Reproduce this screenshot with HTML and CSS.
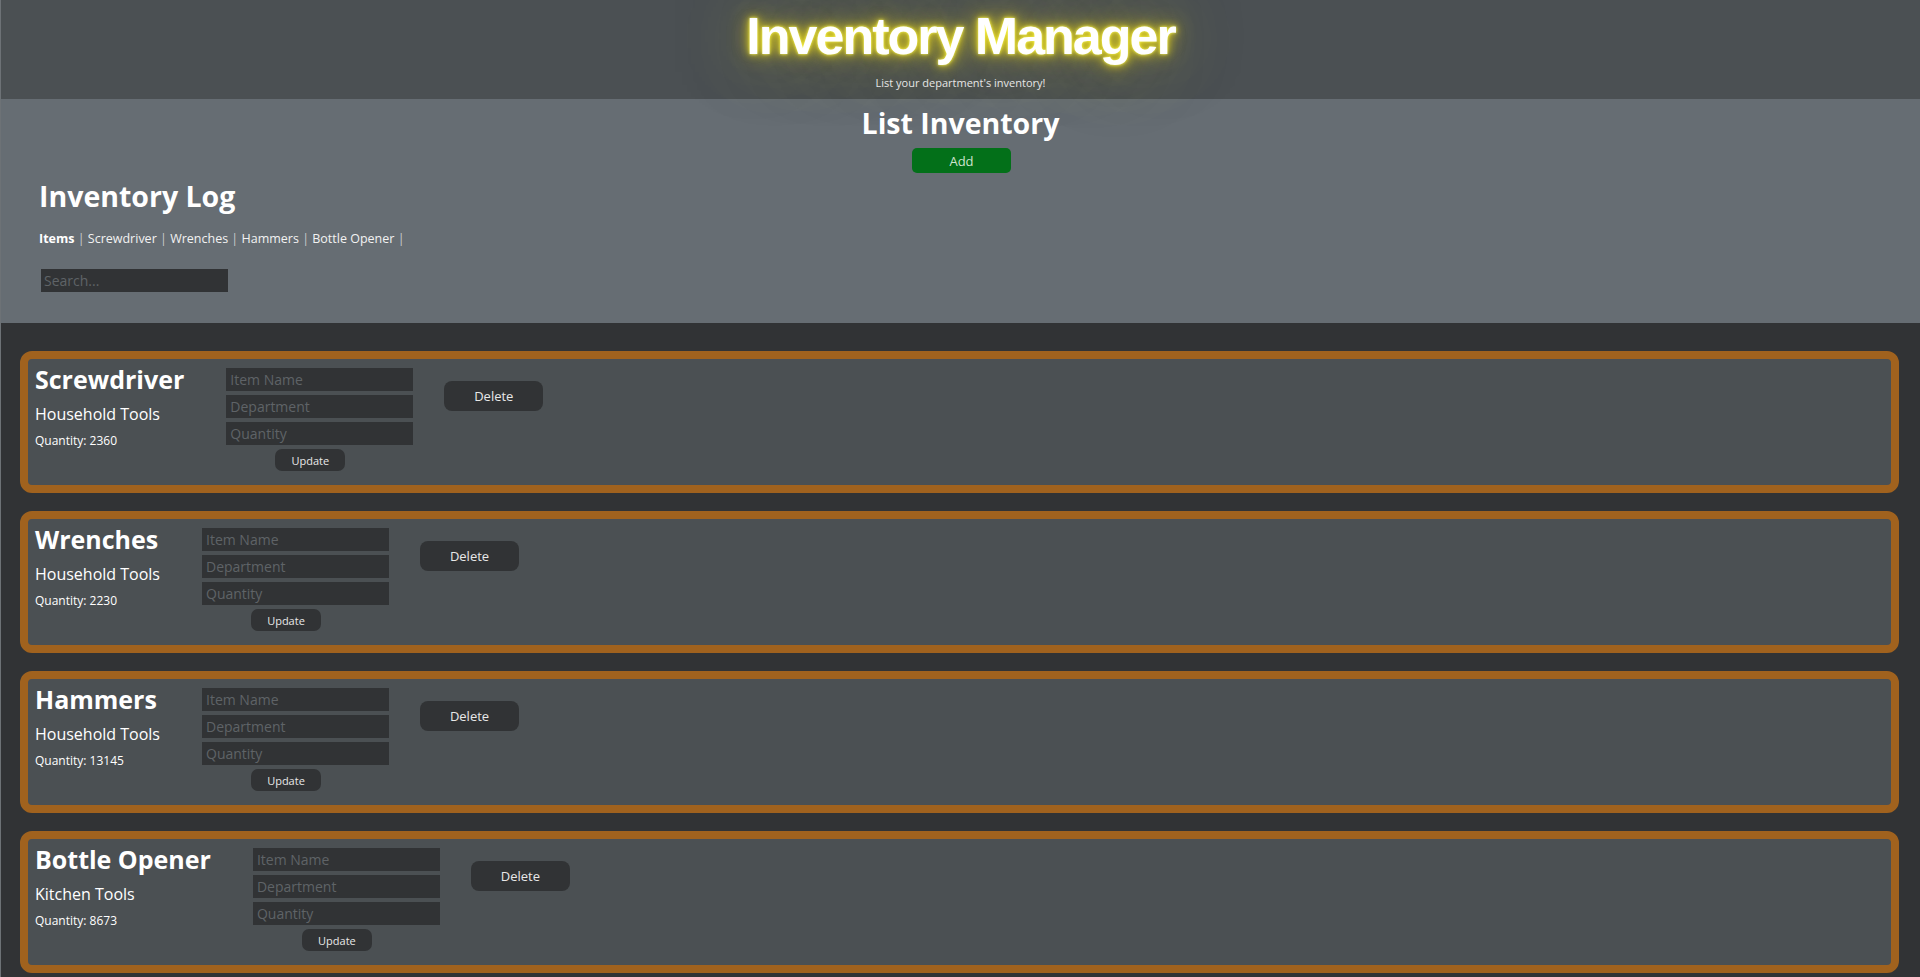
FILE: index.html
```html
<!DOCTYPE html>
<html lang="en">
<head>
<meta charset="utf-8">
<title>Inventory Manager</title>
<link rel="stylesheet" href="styles.css">
</head>
<body>
<header class="top">
  <h1 class="brand">Inventory Manager</h1>
  <p class="tagline">List your department's inventory!</p>
</header>
<section class="panel">
  <h2 class="panel-title">List Inventory</h2>
  <div class="panel-actions"><button class="btn-add">Add</button></div>
  <div class="log">
    <h2 class="log-title">Inventory Log</h2>
    <nav class="log-links"><b class="log-current">Items</b> <span class="sep">|</span> <a class="log-link">Screwdriver</a> <span class="sep">|</span> <a class="log-link">Wrenches</a> <span class="sep">|</span> <a class="log-link">Hammers</a> <span class="sep">|</span> <a class="log-link">Bottle Opener</a> <span class="sep">|</span></nav>
    <input class="search" type="text" placeholder="Search...">
  </div>
</section>
<main class="list">
  <article class="card">
    <div class="info">
      <h3 class="name">Screwdriver</h3>
      <p class="dept">Household Tools</p>
      <p class="qty">Quantity: 2360</p>
    </div>
    <form class="edit">
      <input class="field" type="text" placeholder="Item Name">
      <input class="field" type="text" placeholder="Department">
      <input class="field" type="text" placeholder="Quantity">
      <button class="btn-update" type="button">Update</button>
    </form>
    <button class="btn-delete">Delete</button>
  </article>
  <article class="card">
    <div class="info">
      <h3 class="name">Wrenches</h3>
      <p class="dept">Household Tools</p>
      <p class="qty">Quantity: 2230</p>
    </div>
    <form class="edit">
      <input class="field" type="text" placeholder="Item Name">
      <input class="field" type="text" placeholder="Department">
      <input class="field" type="text" placeholder="Quantity">
      <button class="btn-update" type="button">Update</button>
    </form>
    <button class="btn-delete">Delete</button>
  </article>
  <article class="card">
    <div class="info">
      <h3 class="name">Hammers</h3>
      <p class="dept">Household Tools</p>
      <p class="qty">Quantity: 13145</p>
    </div>
    <form class="edit">
      <input class="field" type="text" placeholder="Item Name">
      <input class="field" type="text" placeholder="Department">
      <input class="field" type="text" placeholder="Quantity">
      <button class="btn-update" type="button">Update</button>
    </form>
    <button class="btn-delete">Delete</button>
  </article>
  <article class="card">
    <div class="info">
      <h3 class="name">Bottle Opener</h3>
      <p class="dept">Kitchen Tools</p>
      <p class="qty">Quantity: 8673</p>
    </div>
    <form class="edit">
      <input class="field" type="text" placeholder="Item Name">
      <input class="field" type="text" placeholder="Department">
      <input class="field" type="text" placeholder="Quantity">
      <button class="btn-update" type="button">Update</button>
    </form>
    <button class="btn-delete">Delete</button>
  </article>
</main>
</body>
</html>
```

FILE: styles.css
```css
* { box-sizing: border-box; }

html, body {
  margin: 0;
  padding: 0;
  background: #313335;
}

body {
  font-family: "Open Sans", "Noto Sans", "DejaVu Sans", sans-serif;
  color: #ffffff;
  border-left: 1px solid #6d7276;
  min-height: 977px;
}

.top {
  height: 99px;
  background: #4b5053;
  text-align: center;
  padding-top: 6px;
}

.brand {
  margin: 0;
  font-family: "Liberation Sans", Arial, sans-serif;
  font-weight: 700;
  font-size: 52px;
  line-height: 60px;
  letter-spacing: -2px;
  color: #ffffff;
  text-shadow: 0 0 3px #ffff60, 0 0 9px #f5e31a, 0 0 20px rgba(240, 220, 20, 0.8), 0 0 70px rgba(230, 220, 60, 0.5);
}

.tagline {
  margin: 10px 0 0;
  font-size: 11px;
  line-height: 14px;
  color: #e6e6e6;
}

.panel {
  background: #666d73;
  height: 224px;
  padding-top: 7px;
}

.panel-title {
  margin: 0;
  text-align: center;
  font-size: 28.5px;
  line-height: 34px;
  font-weight: 700;
}

.panel-actions {
  display: flex;
  justify-content: center;
  margin-top: 8px;
}

.btn-add {
  width: 99px;
  height: 25px;
  margin-left: 2px;
  border: none;
  border-radius: 5px;
  background: #037019;
  color: #cfe3cf;
  font-family: inherit;
  font-size: 13px;
  padding: 0;
}

.log {
  padding-left: 38px;
  margin-top: 5px;
}

.log-title {
  margin: 0;
  font-size: 28.5px;
  line-height: 36px;
  font-weight: 700;
}

.log-links {
  margin-top: 15px;
  font-size: 12.5px;
  line-height: 20px;
  color: #c9cbcd;
}

.log-current {
  color: #ffffff;
  font-weight: 700;
}

.log-link {
  color: #f2f2f2;
}

.search {
  display: block;
  margin: 20px 0 0 2px;
  width: 187px;
  height: 23px;
  border: none;
  background: #313335;
  color: #ffffff;
  font-family: inherit;
  font-size: 14px;
  padding: 0 3px;
}

.search::placeholder,
.field::placeholder {
  color: #5f6367;
}

.list {
  padding: 28px 21px 20px 19px;
  display: flex;
  flex-direction: column;
  gap: 18px;
}

.card {
  display: flex;
  align-items: flex-start;
  border: 8px solid #a0621e;
  border-radius: 12px;
  background: #4b5053;
  padding: 5px 7px 14px;
}

.info {
  margin-right: 42px;
}

.name {
  margin: 0;
  font-size: 25px;
  line-height: 30px;
  font-weight: 700;
  white-space: nowrap;
}

.dept {
  margin: 10px 0 0;
  font-size: 16px;
  line-height: 20px;
  white-space: nowrap;
}

.qty {
  margin: 9px 0 0;
  font-size: 12px;
  line-height: 16px;
  white-space: nowrap;
}

.edit {
  margin: 4px 0 0;
  width: 187px;
  display: flex;
  flex-direction: column;
  gap: 4px;
}

.field {
  display: block;
  width: 187px;
  height: 23px;
  border: none;
  background: #313335;
  color: #ffffff;
  font-family: inherit;
  font-size: 14px;
  padding: 0 4px;
}

.btn-update {
  align-self: center;
  margin-right: 19px;
  width: 70px;
  height: 22px;
  border: none;
  border-radius: 7px;
  background: #313335;
  color: #e8e8e8;
  font-family: inherit;
  font-size: 11px;
  padding: 0;
}

.btn-delete {
  margin: 17px 0 0 31px;
  width: 99px;
  height: 30px;
  border: none;
  border-radius: 8px;
  background: #313335;
  color: #e8e8e8;
  font-family: inherit;
  font-size: 13px;
  padding: 0;
}
```
